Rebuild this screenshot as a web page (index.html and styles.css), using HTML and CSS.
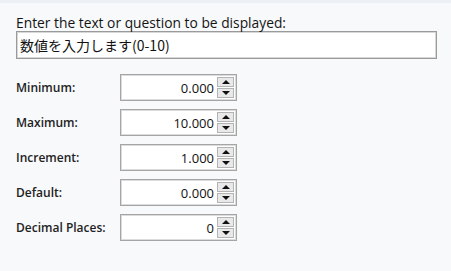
FILE: index.html
```html
<!DOCTYPE html>
<html lang="ja">
<head>
    <meta charset="UTF-8">
    <title>Numeric Question</title>
    <link rel="stylesheet" href="styles.css">
</head>
<body>
<div class="panel">
    <label class="prompt-label" for="prompt">Enter the text or question to be displayed:</label>
    <div class="prompt-box" id="prompt">数値を入力します(0-10)</div>

    <div class="fields">
        <div class="field-row">
            <span class="field-label">Minimum:</span>
            <div class="spin">
                <span class="spin-value">0.000</span>
                <div class="spin-buttons">
                    <span class="spin-btn up"></span>
                    <span class="spin-btn down"></span>
                </div>
            </div>
        </div>
        <div class="field-row">
            <span class="field-label">Maximum:</span>
            <div class="spin">
                <span class="spin-value">10.000</span>
                <div class="spin-buttons">
                    <span class="spin-btn up"></span>
                    <span class="spin-btn down"></span>
                </div>
            </div>
        </div>
        <div class="field-row">
            <span class="field-label">Increment:</span>
            <div class="spin">
                <span class="spin-value">1.000</span>
                <div class="spin-buttons">
                    <span class="spin-btn up"></span>
                    <span class="spin-btn down"></span>
                </div>
            </div>
        </div>
        <div class="field-row">
            <span class="field-label">Default:</span>
            <div class="spin">
                <span class="spin-value">0.000</span>
                <div class="spin-buttons">
                    <span class="spin-btn up"></span>
                    <span class="spin-btn down"></span>
                </div>
            </div>
        </div>
        <div class="field-row">
            <span class="field-label">Decimal Places:</span>
            <div class="spin">
                <span class="spin-value">0</span>
                <div class="spin-buttons">
                    <span class="spin-btn up"></span>
                    <span class="spin-btn down"></span>
                </div>
            </div>
        </div>
    </div>
</div>
</body>
</html>
```

FILE: styles.css
```css
body {
    margin: 0;
    background: #f8f9fb;
    font-family: "Open Sans", "Noto Sans CJK JP", sans-serif;
    color: #1a1a1a;
}
.panel {
    border-top: 3px solid #edf0f5;
    padding: 12px 14px 0 16px;
}
.prompt-label {
    display: block;
    font-size: 13.8px;
    line-height: 16px;
    color: #141414;
}
.prompt-box {
    box-sizing: border-box;
    height: 28px;
    background: #fff;
    border: 1px solid #9a9a9a;
    box-shadow: inset 0 0 0 1px #d8d8d8;
    padding: 0 3px;
    font-family: "Noto Sans CJK JP", sans-serif;
    font-size: 14px;
    line-height: 26px;
    color: #111;
}
.fields {
    margin-top: 15px;
    display: flex;
    flex-direction: column;
    gap: 8px;
}
.field-row {
    display: flex;
    align-items: center;
}
.field-label {
    width: 104px;
    font-size: 12px;
    font-weight: 600;
    color: #222;
}
.spin {
    box-sizing: border-box;
    width: 117px;
    height: 27px;
    background: #fff;
    border: 1px solid #a5a5a5;
    box-shadow: inset 0 0 0 1px #dcdcdc;
    display: flex;
    align-items: center;
    padding: 2px 2px 2px 4px;
}
.spin-value {
    flex: 1;
    text-align: right;
    font-size: 13px;
    color: #111;
    padding-right: 3px;
}
.spin-buttons {
    display: flex;
    flex-direction: column;
    gap: 1px;
    height: 100%;
}
.spin-btn {
    box-sizing: border-box;
    width: 17px;
    flex: 1;
    background: #e9e9e9;
    border: 1px solid #b4b4b4;
    display: flex;
    align-items: center;
    justify-content: center;
}
.spin-btn::after {
    content: "";
    border-left: 4px solid transparent;
    border-right: 4px solid transparent;
}
.spin-btn.up::after {
    border-bottom: 4px solid #111;
}
.spin-btn.down::after {
    border-top: 4px solid #111;
}
```
